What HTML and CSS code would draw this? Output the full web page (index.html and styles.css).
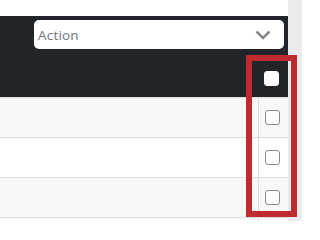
FILE: index.html
```html
<!DOCTYPE html>
<html>
<head>
<meta charset="utf-8">
<link rel="stylesheet" href="styles.css">
</head>
<body>
<div class="page">
  <div class="main">
    <div class="top"></div>
    <div class="toolbar">
      <div class="select">
        <span class="select-text">Action</span>
        <svg class="chev" width="16" height="10" viewBox="0 0 16 10"><path d="M1.5 1.5 L8 8 L14.5 1.5" fill="none" stroke="#8a8a8a" stroke-width="2.6"/></svg>
      </div>
    </div>
    <table class="grid">
      <thead>
        <tr><th class="c-main"></th><th class="c-check"><span class="box head"></span></th></tr>
      </thead>
      <tbody>
        <tr class="odd"><td class="c-main"></td><td class="c-check"><span class="box"></span></td></tr>
        <tr><td class="c-main"></td><td class="c-check"><span class="box"></span></td></tr>
        <tr class="odd"><td class="c-main"></td><td class="c-check"><span class="box"></span></td></tr>
        <tr><td class="c-main"></td><td class="c-check"></td></tr>
      </tbody>
    </table>
  </div>
  <div class="strip"></div>
  <div class="highlight"></div>
</div>
</body>
</html>
```
FILE: styles.css
```css
html, body { margin: 0; padding: 0; }
body { font-family: "Open Sans", "DejaVu Sans", sans-serif; background: #ffffff; overflow: hidden; }
.page { display: flex; width: 302px; height: 221px; position: relative; overflow: hidden; }
.main { width: 288px; background: #ffffff; }
.strip { flex: 1; background: #ebebeb; }
.top { height: 16px; background: #ffffff; }
.toolbar { background: #212529; height: 41px; padding: 4px 4px 0 34px; box-sizing: border-box; }
.select { height: 29px; background: #ffffff; border-radius: 5px; display: flex; align-items: center; justify-content: space-between; padding: 0 13px 0 4px; box-sizing: border-box; width: 250px; }
.select-text { font-size: 13.5px; color: #6f7680; letter-spacing: 0.2px; }
.chev { display: block; margin-top: 1px; }
.grid { border-collapse: collapse; width: 288px; table-layout: fixed; }
.grid th, .grid td { height: 40px; padding: 0; box-sizing: border-box; }
.grid thead th { background: #212529; }
.grid tbody td { border-top: 1px solid #dcdcdc; background: #ffffff; }
.grid tbody tr.odd td { background: #f8f8f8; }
.c-check { width: 30px; text-align: left; }
.grid tbody td.c-check { border-left: 1px solid #dcdcdc; }
.box { display: block; width: 13px; height: 13px; border: 1px solid #8a8a8a; border-radius: 3px; background: #ffffff; margin-left: 6px; }
.box.head { border-color: #ffffff; margin-top: 3px; }
.highlight { position: absolute; left: 246px; top: 55px; width: 51px; height: 162px; border: 6px solid #bf2a2e; box-sizing: border-box; }
```
